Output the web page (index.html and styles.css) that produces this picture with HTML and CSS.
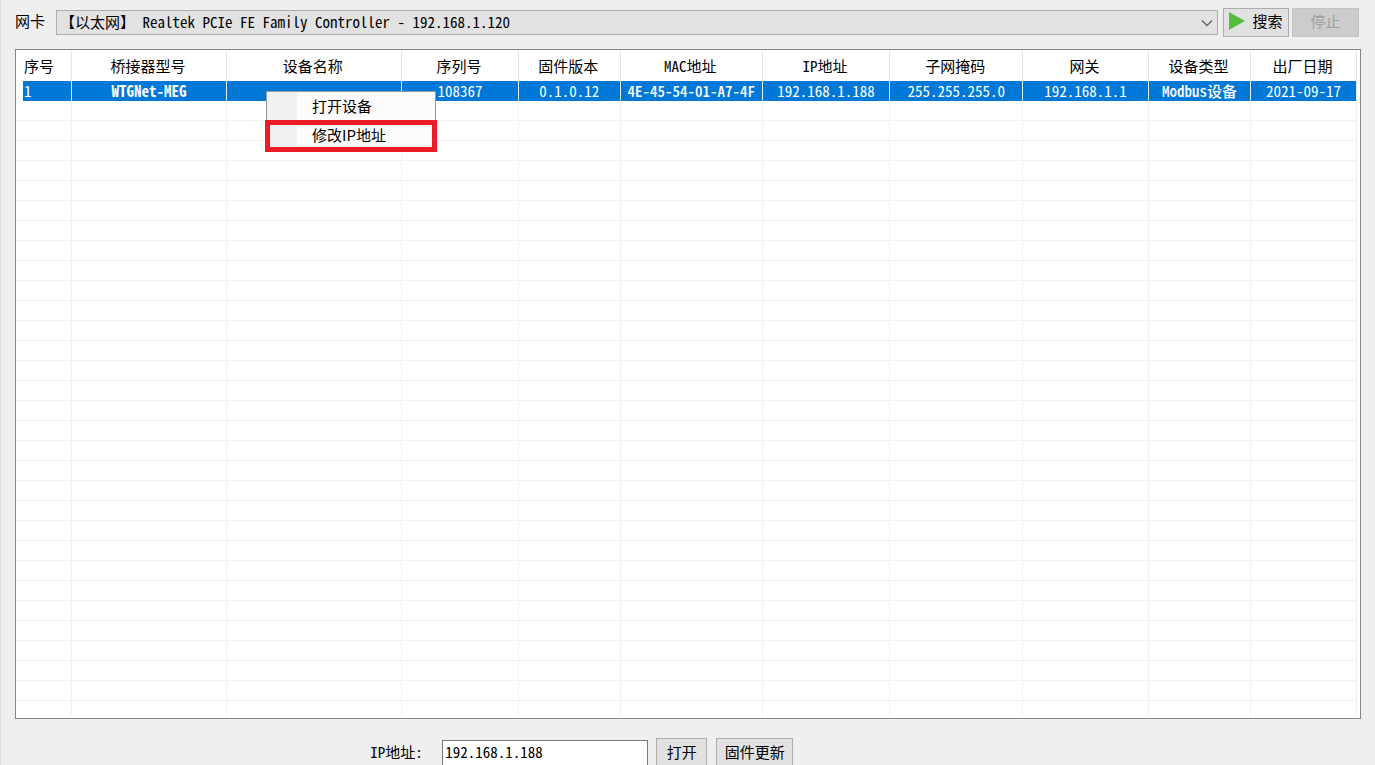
FILE: index.html
```html
<!DOCTYPE html>
<html lang="zh-CN">
<head>
<meta charset="utf-8">
<title>设备搜索</title>
<link rel="stylesheet" href="styles.css">
</head>
<body>
<main class="window">
  <div class="toolbar">
    <label class="toolbar-label" for="adapter">网卡</label>
    <div class="combo">
      <select class="combo-select" id="adapter">
        <option>【以太网】 Realtek PCIe FE Family Controller - 192.168.1.120</option>
      </select>
      <svg class="combo-arrow" viewBox="0 0 12 8" aria-hidden="true"><path d="M1 1.5 6 6.5 11 1.5"/></svg>
    </div>
    <button class="button search" type="button"><svg class="play" viewBox="0 0 16 18" aria-hidden="true"><path d="M0 0 16 9 0 18Z"/></svg>搜索</button>
    <button class="button stop" type="button" disabled>停止</button>
  </div>

  <div class="list">
    <table class="grid">
      <colgroup>
        <col class="c-index"><col class="c-model"><col class="c-name"><col class="c-serial"><col class="c-firmware"><col class="c-mac"><col class="c-ip"><col class="c-mask"><col class="c-gateway"><col class="c-type"><col class="c-date">
      </colgroup>
      <thead>
        <tr><th>序号</th><th>桥接器型号</th><th>设备名称</th><th>序列号</th><th>固件版本</th><th>MAC地址</th><th>IP地址</th><th>子网掩码</th><th>网关</th><th>设备类型</th><th>出厂日期</th></tr>
      </thead>
      <tbody id="rows">
        <tr class="selected"><td><span class="cell">1</span></td><td class="strong">WTGNet-MEG</td><td></td><td>108367</td><td>0.1.0.12</td><td class="medium">4E-45-54-01-A7-4F</td><td>192.168.1.188</td><td>255.255.255.0</td><td>192.168.1.1</td><td class="medium">Modbus设备</td><td>2021-09-17</td></tr>
      </tbody>
    </table>
    <div class="menu" role="menu">
      <button class="menu-item" type="button" role="menuitem">打开设备</button>
      <button class="menu-item marked" type="button" role="menuitem">修改IP地址</button>
    </div>
  </div>

  <div class="footer">
    <label class="footer-label" for="ip">IP地址:</label>
    <input class="ip-input" id="ip" type="text" value="192.168.1.188">
    <button class="button open" type="button">打开</button>
    <button class="button update" type="button">固件更新</button>
  </div>
</main>
<script src="rows.js"></script>
</body>
</html>
```
FILE: rows.js
```js
const body = document.getElementById("rows");
const emptyRows = 31;
for (let i = 0; i < emptyRows; i++) {
  const row = body.insertRow();
  if (i === emptyRows - 1) row.className = "last";
  for (let c = 0; c < 11; c++) row.insertCell();
}
```
FILE: styles.css
```css
* { box-sizing: border-box; }

html { overflow: hidden; }

body {
  margin: 0;
  background: #efefef;
  color: #000;
  font: 15px/20px "Noto Sans CJK SC", sans-serif;
  font-feature-settings: "hwid";
}

button, input, select {
  font: inherit;
  font-feature-settings: inherit;
  color: inherit;
}

.window {
  min-height: 100vh;
  padding: 7px 14px 0;
  border-left: 1px solid #dcdcdc;
}

.toolbar {
  display: flex;
  align-items: center;
  height: 30px;
  padding-right: 2px;
}

.toolbar-label {
  width: 41px;
  padding-bottom: 2px;
}

.combo {
  position: relative;
  flex: 1;
}

.combo-select {
  display: block;
  width: 100%;
  height: 25px;
  padding: 0 24px 0 3px;
  border: 1px solid #adadad;
  border-radius: 0;
  background: #e2e2e2;
  appearance: none;
}

.combo-arrow {
  position: absolute;
  top: 9px;
  right: 5px;
  width: 12px;
  height: 8px;
  fill: none;
  stroke: #666;
  stroke-width: 1.5;
  pointer-events: none;
}

.button {
  display: flex;
  align-items: center;
  justify-content: center;
  height: 29px;
  padding: 0 0 2px;
  border: 1px solid #adadad;
  background: #e1e1e1;
}

.search {
  width: 66px;
  margin-left: 5px;
  gap: 7px;
}

.play {
  width: 16px;
  height: 18px;
  fill: #56bd3c;
}

.stop {
  width: 67px;
  margin-left: 3px;
  border-color: #c3c3c3;
  background: #cccccc;
  color: #a0a0a0;
}

.list {
  position: relative;
  margin-top: 12px;
  padding: 1px 3px 2px 0;
  border: 1px solid #828790;
  background: #fff;
}

.grid {
  width: 100%;
  border-collapse: separate;
  border-spacing: 0;
  table-layout: fixed;
  text-align: center;
  white-space: nowrap;
}

.c-index { width: 4.2%; }
.c-model { width: 11.5%; }
.c-name { width: 13.1%; }
.c-serial { width: 8.7%; }
.c-firmware { width: 7.6%; }
.c-mac { width: 10.6%; }
.c-ip { width: 9.5%; }
.c-mask { width: 9.9%; }
.c-gateway { width: 9.4%; }
.c-type { width: 7.6%; }
.c-date { width: 7.9%; }

.grid th {
  height: 30px;
  padding: 0 2px 1px 0;
  border-right: 1px solid #e5e5e5;
  font-weight: 400;
}

.grid th:first-child {
  padding-left: 8px;
  text-align: left;
}

.grid td {
  height: 20px;
  padding: 0;
  border-right: 1px solid #f0f0f0;
  border-bottom: 1px solid #f0f0f0;
  line-height: 19px;
}

.grid .last td {
  height: 15px;
  border-bottom: 0;
}

.grid .selected td {
  border-right-color: #e8f2fb;
  border-bottom-color: #0078d7;
  background: #0078d7;
  color: #fff;
}

.grid .selected td:first-child {
  padding-left: 7px;
  border-bottom: 0;
  background-clip: content-box;
  text-align: left;
}

.cell {
  display: block;
  height: 20px;
  padding-left: 1px;
}

.grid .strong { font-weight: 700; }
.grid .medium { font-weight: 500; }

.menu {
  position: absolute;
  top: 41px;
  left: 250px;
  width: 170px;
  border: 1px solid #999;
  background: linear-gradient(to right, #f1f1f1 30px, #fcfcfc 30px);
  font-feature-settings: normal;
}

.menu-item {
  display: block;
  width: 100%;
  height: 30px;
  padding: 0 0 2px 45px;
  border: 0;
  background: none;
  text-align: left;
}

.marked {
  height: 28px;
  padding-bottom: 3px;
  outline: 5px solid #ed1c24;
  outline-offset: -3px;
}

.footer {
  display: flex;
  align-items: flex-start;
  height: 46px;
  padding: 19px 0 0 26.4%;
}

.footer-label {
  width: 72px;
  padding-top: 4px;
}

.ip-input {
  width: 206px;
  height: 27px;
  margin: 2px 8px 0 0;
  padding: 0 2px 4px;
  border: 1px solid #7a7a7a;
  border-radius: 0;
  background: #fff;
}

.open {
  width: 51px;
  margin-right: 9px;
}

.update { width: 77px; }
```
